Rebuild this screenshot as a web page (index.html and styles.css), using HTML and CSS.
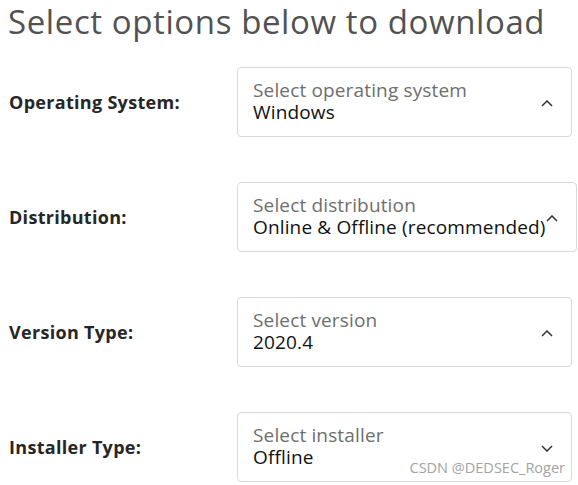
FILE: index.html
```html
<!DOCTYPE html>
<html lang="en">
	<head>
		<meta charset="UTF-8">
		<meta name="viewport" content="width=device-width, initial-scale=1.0">
		<title>Download</title>
		<link rel="stylesheet" href="styles.css">
	</head>
	<body>
		<h1>Select options below to download</h1>
		<div class="options">
			<div class="row">
				<label>Operating System:</label>
				<div class="selectbox">
					<div class="texts">
						<div class="hint">Select operating system</div>
						<div class="value">Windows</div>
					</div>
					<svg class="chevron" width="12" height="7" viewBox="0 0 12 7"><path d="M1 6 L6 1 L11 6" fill="none" stroke="#333" stroke-width="1.5"/></svg>
				</div>
			</div>
			<div class="row">
				<label>Distribution:</label>
				<div class="selectbox">
					<div class="texts">
						<div class="hint">Select distribution</div>
						<div class="value">Online &amp; Offline (recommended)</div>
					</div>
					<svg class="chevron" width="12" height="7" viewBox="0 0 12 7"><path d="M1 6 L6 1 L11 6" fill="none" stroke="#333" stroke-width="1.5"/></svg>
				</div>
			</div>
			<div class="row">
				<label>Version Type:</label>
				<div class="selectbox">
					<div class="texts">
						<div class="hint">Select version</div>
						<div class="value">2020.4</div>
					</div>
					<svg class="chevron" width="12" height="7" viewBox="0 0 12 7"><path d="M1 6 L6 1 L11 6" fill="none" stroke="#333" stroke-width="1.5"/></svg>
				</div>
			</div>
			<div class="row">
				<label>Installer Type:</label>
				<div class="selectbox">
					<div class="texts">
						<div class="hint">Select installer</div>
						<div class="value">Offline</div>
					</div>
					<svg class="chevron" width="12" height="7" viewBox="0 0 12 7"><path d="M1 1 L6 6 L11 1" fill="none" stroke="#333" stroke-width="1.5"/></svg>
				</div>
			</div>
		</div>
		<div class="watermark">CSDN @DEDSEC_Roger</div>
	</body>
</html>
```

FILE: styles.css
```css
body {
	font-family: "Open Sans", "Noto Sans", sans-serif;
	margin: 0;
	padding: 0 6px 0 8px;
	background-color: #ffffff;
	position: relative;
	height: 485px;
	box-sizing: border-box;
	overflow: hidden;
}

h1 {
	margin: 2px 0 0 0;
	font-size: 33px;
	line-height: 40px;
	font-weight: 400;
	letter-spacing: 0.6px;
	color: #525252;
	white-space: nowrap;
}

.options {
	display: flex;
	flex-direction: column;
	gap: 45px;
	margin-top: 25px;
}

.row {
	display: grid;
	grid-template-columns: 229px 1fr;
	align-items: center;
}

label {
	font-size: 18px;
	font-weight: 700;
	letter-spacing: 0.3px;
	color: #262626;
	padding-left: 1px;
}

.selectbox {
	height: 70px;
	box-sizing: border-box;
	border: 1px solid #d9d9d9;
	border-radius: 4px;
	padding: 0 18px 0 15px;
	display: flex;
	align-items: center;
}

.texts {
	flex: 1;
	min-width: 0;
	white-space: nowrap;
	font-size: 19px;
	line-height: 22px;
	letter-spacing: 0.15px;
	margin-top: -3px;
}

.hint {
	color: #6e6e6e;
}

.value {
	color: #111111;
}

.chevron {
	flex: none;
	margin-top: 2px;
}

.watermark {
	position: absolute;
	right: 13px;
	bottom: 8px;
	font-size: 14.5px;
	color: #a3a3a3;
}
```
